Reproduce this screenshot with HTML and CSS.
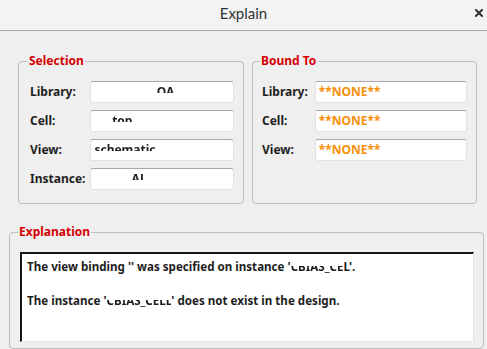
FILE: index.html
```html
<!DOCTYPE html>
<html lang="en">
<head>
  <meta charset="UTF-8" />
  <title>Explain</title>
  <link rel="stylesheet" href="styles.css">
</head>
<body>

<div class="titlebar">
  <span></span>
  <span class="title">Explain</span>
  <svg class="close" width="8" height="8" viewBox="0 0 8 8">
    <path d="M1 1 L7 7 M7 1 L1 7" stroke="#2e3436" stroke-width="2" stroke-linecap="square"/>
  </svg>
</div>

<div class="dialog">
  <div class="top-row">
    <fieldset class="group selection">
      <legend>Selection</legend>
      <div class="form-grid">
        <label>Library:</label>
        <div class="field"><span class="mask">PDK_ANLG</span><span class="cut-top">QA</span></div>
        <label>Cell:</label>
        <div class="field"><span class="mask">tb_</span><span class="cut-top">top</span></div>
        <label>View:</label>
        <div class="field"><span class="cut-top">schematic</span></div>
        <label>Instance:</label>
        <div class="field"><span class="mask">I_BIAS</span><span class="cut-top">AL</span></div>
      </div>
    </fieldset>

    <fieldset class="group bound">
      <legend>Bound To</legend>
      <div class="form-grid">
        <label>Library:</label>
        <div class="field none">**NONE**</div>
        <label>Cell:</label>
        <div class="field none">**NONE**</div>
        <label>View:</label>
        <div class="field none">**NONE**</div>
      </div>
    </fieldset>
  </div>

  <fieldset class="group explain">
    <legend>Explanation</legend>
    <div class="textbox">
      The view binding '' was specified on instance '<span class="cut-bottom">CBIAS_CE</span>L'.<br><br>
      The instance '<span class="cut-bottom">CBIAS_CELL</span>' does not exist in the design.
    </div>
  </fieldset>
</div>

</body>
</html>
```

FILE: styles.css
```css
* {
  box-sizing: border-box;
}

body {
  margin: 0;
  background: #efefef;
  font-family: 'Noto Sans', 'Open Sans', sans-serif;
  font-size: 12px;
  font-weight: bold;
  color: #1e1e1e;
  overflow: hidden;
}

.titlebar {
  display: grid;
  grid-template-columns: 1fr auto 1fr;
  align-items: center;
  height: 31px;
  padding-bottom: 4px;
  background: #f3f3f3;
  border-bottom: 1px solid #a9a9a9;
}

.title {
  font-family: Lato, sans-serif;
  font-weight: normal;
  font-size: 15px;
  color: #2e3436;
}

.close {
  justify-self: end;
  margin-right: 4px;
}

.dialog {
  padding: 22px 3px 0 9px;
}

.top-row {
  display: grid;
  grid-template-columns: 226px 225px;
  gap: 8px;
  margin-left: 9px;
}

.group {
  margin: 0;
  min-width: 0;
  border: 1px solid #bdbdbd;
  border-radius: 4px;
  padding: 12px 9px 13px 11px;
}

.group.bound {
  padding-left: 9px;
}

.group legend {
  padding: 0 1px;
  margin-left: -2px;
  line-height: 16px;
  color: #d40000;
}

.form-grid {
  display: grid;
  grid-template-columns: auto 1fr;
  column-gap: 7px;
  row-gap: 7px;
  align-items: center;
}

.selection .form-grid {
  column-gap: 5px;
}

.form-grid label {
  line-height: 22px;
}

.field {
  height: 22px;
  line-height: 20px;
  padding: 0 3px;
  background: #fff;
  border: 1px solid #e2e2e2;
  border-top-color: #a8a8a8;
  border-radius: 3px;
  white-space: nowrap;
  overflow: hidden;
}

.field.none {
  color: #f7900a;
}

.mask {
  color: #fff;
}

.cut-top {
  color: transparent;
  background: linear-gradient(#1e1e1e 58%, #fff 58%);
  -webkit-background-clip: text;
  background-clip: text;
}

.cut-bottom {
  color: transparent;
  background: linear-gradient(#fff 50%, #1e1e1e 50%);
  -webkit-background-clip: text;
  background-clip: text;
}

.explain {
  margin-top: 20px;
  padding: 12px 9px 6px 10px;
}

.textbox {
  height: 90px;
  padding: 4px 5px;
  font-size: 11.6px;
  line-height: 17px;
  background: #fff;
  border: 1px solid #e4e4e4;
  border-top: 2px solid #151515;
  border-left: 2px solid #151515;
}
```
